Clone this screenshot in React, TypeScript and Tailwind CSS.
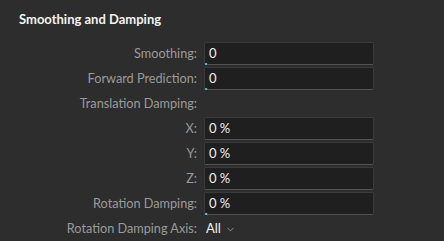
import { ChevronDown } from 'lucide-react';

type Row = { label: string; value?: string; dot?: boolean };

const rows: Row[] = [
  { label: 'Smoothing:', value: '0', dot: true },
  { label: 'Forward Prediction:', value: '0', dot: true },
  { label: 'Translation Damping:' },
  { label: 'X:', value: '0 %' },
  { label: 'Y:', value: '0 %' },
  { label: 'Z:', value: '0 %' },
  { label: 'Rotation Damping:', value: '0 %', dot: true },
];

function Field({ value, dot }: { value: string; dot?: boolean }) {
  return (
    <div className="relative w-[170px] h-[23px] flex items-center pl-[4px] bg-[#1f1f1f] border border-[#3b3b3b] border-b-[#525252] rounded-[2px] text-[13px] text-[#f0f0f0]">
      {value}
      {dot && <span className="absolute left-0 bottom-[-1px] w-[2px] h-[2px] bg-[#1fc8e0]" />}
    </div>
  );
}

export default function App() {
  return (
    <div className="w-[444px] h-[241px] bg-[#2d2d2d] text-[13px] font-['Lato',sans-serif] overflow-hidden">
      <div className="pt-[11px] pl-[19px] h-[42px]">
        <h2 className="font-bold text-[#f2f2f2] leading-[17px]">Smoothing and Damping</h2>
      </div>

      <div className="flex flex-col gap-[2px]">
        {rows.map((r) => (
          <div key={r.label} className="flex items-center h-[23px]">
            <div className="w-[198px] text-right text-[12.7px] text-[#9a9a9a] pr-[1px]">{r.label}</div>
            <div className="ml-[6px]">
              {r.value !== undefined && <Field value={r.value} dot={r.dot} />}
            </div>
          </div>
        ))}

        {/* Axis dropdown */}
        <div className="flex items-center h-[23px]">
          <div className="w-[198px] text-right text-[12.7px] text-[#9a9a9a] pr-[1px]">Rotation Damping Axis:</div>
          <button className="ml-[8px] flex items-center gap-[4px] text-[#f0f0f0]">
            All
            <ChevronDown size={11} strokeWidth={2} className="text-[#9a9a9a] mt-[1px]" />
          </button>
        </div>
      </div>
    </div>
  );
}
